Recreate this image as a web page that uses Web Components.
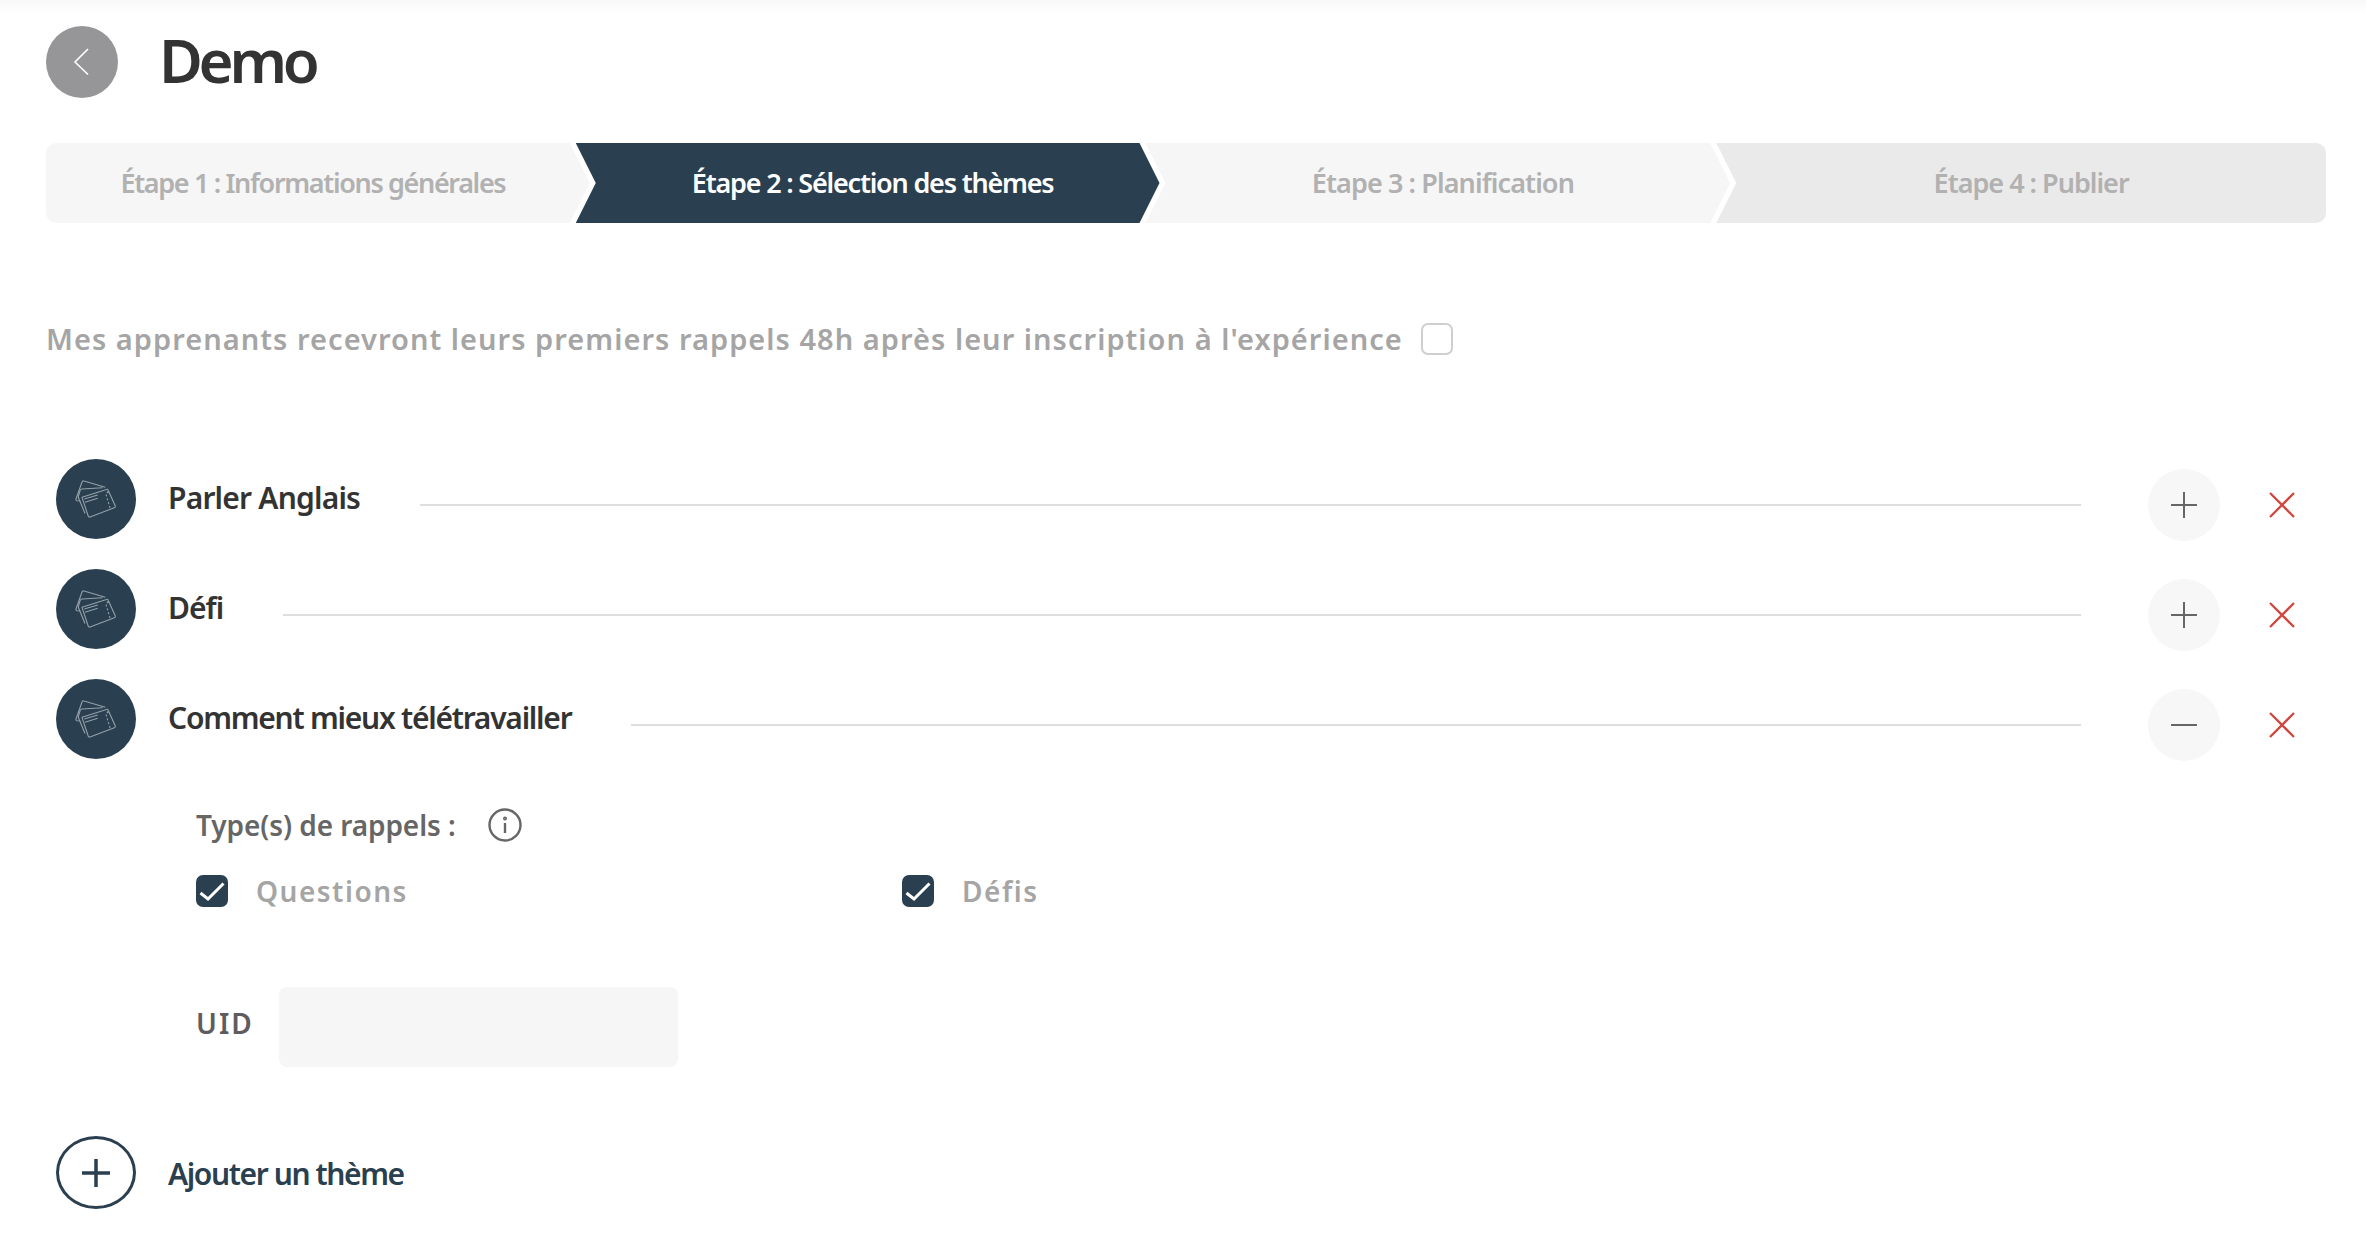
<!DOCTYPE html>
<html lang="fr">
<head>
<meta charset="utf-8">
<title>Demo</title>
<style>
    html, body { margin: 0; background: #fff; }
    body { font-family: "Noto Sans", "Open Sans", sans-serif; }
</style>
</head>
<body>
<theme-page></theme-page>
<script>
const BASE_FONT = '"Noto Sans", "Open Sans", sans-serif';

class PageHeader extends HTMLElement {
    constructor() {
        super();
        this.attachShadow({ mode: 'open' });
        this.shadowRoot.innerHTML = `
        <style>
        :host { display: flex; align-items: center; gap: 41px; height: 72px; }
        .back { width: 72px; height: 72px; border-radius: 50%; background: #969597; display: flex; align-items: center; justify-content: center; }
        h1 { margin: -5px 0 0; font: 600 60px/72px ${BASE_FONT}; color: #333; letter-spacing: -4.3px; }
        </style>
        <div class="back">
            <svg width="72" height="72" viewBox="0 0 72 72" fill="none" stroke="#fff" stroke-width="1.6"><path d="M42 23 29 36l13 12.500"/></svg>
        </div>
        <h1><slot></slot></h1>`;
    }
}

class StepBar extends HTMLElement {
    constructor() {
        super();
        this.attachShadow({ mode: 'open' });
        this.shadowRoot.innerHTML = `
        <style>
        :host { display: flex; height: 80px; margin-top: 45px; }
        </style>
        <slot></slot>`;
    }
}

class StepItem extends HTMLElement {
    constructor() {
        super();
        this.attachShadow({ mode: 'open' });
        this.shadowRoot.innerHTML = `
        <style>
        :host {
            display: flex; align-items: center; justify-content: center; height: 80px; box-sizing: border-box;
            background: #f6f6f6; color: #b1b1b1; font: 600 27px/1 ${BASE_FONT}; letter-spacing: -1.2px; margin-left: -14px;
            clip-path: polygon(0 0, calc(100% - 20px) 0, 100% 50%, calc(100% - 20px) 100%, 0 100%, 20px 50%);
            padding: 0 20px 2px 30px;
        }
        :host([first]) { margin-left: 0; border-radius: 10px 0 0 10px; padding: 0 10px 2px 0; letter-spacing: -1.35px; clip-path: polygon(0 0, calc(100% - 20px) 0, 100% 50%, calc(100% - 20px) 100%, 0 100%); }
        :host([active]) { background: #2a3f4f; color: #fff; }
        :host([last]) { background: #eaeaea; border-radius: 0 10px 10px 0; clip-path: polygon(0 0, 100% 0, 100% 100%, 0 100%, 20px 50%); padding-right: 0; padding-left: 20px; }
        </style>
        <slot></slot>`;
    }
}

class CheckBox extends HTMLElement {
    constructor() {
        super();
        this.attachShadow({ mode: 'open' });
        this.shadowRoot.innerHTML = `
        <style>
        :host { display: flex; align-items: center; justify-content: center; flex: none; width: 32px; height: 32px; box-sizing: border-box; border-radius: 7px; border: 2px solid #cfcfcf; }
        :host([checked]) { border: 0; background: #2a3f4f; }
        svg { display: none; }
        :host([checked]) svg { display: block; }
        </style>
        <svg width="32" height="32" viewBox="0 0 32 32" fill="none" stroke="#fff" stroke-width="3"><path d="M4.500 18l7.500 6L27.500 8.500"/></svg>`;
    }
}

class NoticeLine extends HTMLElement {
    constructor() {
        super();
        this.attachShadow({ mode: 'open' });
        this.shadowRoot.innerHTML = `
        <style>
        :host { display: flex; align-items: center; gap: 18px; height: 31px; margin-top: 100px; color: #a5a5a5; font: 600 29px/31px ${BASE_FONT}; letter-spacing: 1.03px; }
        </style>
        <span><slot></slot></span>
        <check-box></check-box>`;
    }
}

class ThemeRow extends HTMLElement {
    constructor() {
        super();
        this.attachShadow({ mode: 'open' });
        const open = this.hasAttribute('open');
        this.shadowRoot.innerHTML = `
        <style>
        :host { display: flex; align-items: flex-start; height: 82px; margin-left: 10px; margin-bottom: 28px; letter-spacing: -1px; }
        .icon { flex: none; width: 80px; height: 80px; border-radius: 50%; background: #2a3f4f; }
        .name { margin-left: 32px; font: 600 30px/78px ${BASE_FONT}; color: #333; white-space: nowrap; }
        .line { flex: 1; height: 2px; margin: 45px 0 0 60px; background: #dedede; }
        .toggle { flex: none; display: block; margin-left: 67px; margin-top: 10px; width: 72px; height: 72px; border-radius: 50%; background: #f7f7f7; }
        .remove { flex: none; display: block; margin: 33px 31px 0 49px; }
        </style>
        <div class="icon">
            <svg width="80" height="80" viewBox="0 0 80 80" fill="none" stroke="#93a1aa" stroke-width="1.100" stroke-linejoin="round">
                <path d="M24.300 42 21 41.700q-1.400-.4-1-1.700L26 23q.5-1.500 2-1L49.300 28.300"/>
                <path d="M46.500 28.800 26 30q-1.300.1-1.800 1.400L22.600 36.500q-.5 1.300 0 2.500L29 54.500"/>
                <path d="M26 38.300 50.500 30.400q1.300-.4 1.800 1L59.300 47q.4 1.300-1 1.800L34 58q-1.300.4-1.800-1z"/>
                <path d="M28.300 40l13.400-4M29 43.300l12.700-4"/>
                <path d="M50 35.500l4.500 15" stroke-dasharray="2 2"/>
                <circle cx="51.700" cy="33.300" r=".5"/>
            </svg>
        </div>
        <div class="name"><slot></slot></div>
        <div class="line"></div>
        <svg class="toggle" viewBox="0 0 72 72" fill="none" stroke="#666" stroke-width="2">
            <path d="M23 36h26${open ? '' : 'M36 23v26'}"/>
        </svg>
        <svg class="remove" width="26" height="26" viewBox="0 0 26 26" fill="none" stroke="#d0473f" stroke-width="2.300"><path d="M1 1l24 24M25 1 1 25"/></svg>`;
    }
}

class ReminderPanel extends HTMLElement {
    constructor() {
        super();
        this.attachShadow({ mode: 'open' });
        this.shadowRoot.innerHTML = `
        <style>
        :host { display: block; padding-left: 150px; margin-top: 44px; }
        .title { display: flex; align-items: center; gap: 32px; height: 40px; font: 600 28px/40px ${BASE_FONT}; color: #666; letter-spacing: -0.08px; }
        .options { display: flex; height: 32px; margin-top: 30px; }
        .opt { display: flex; align-items: center; gap: 28px; width: 706px; font: 600 28px/32px ${BASE_FONT}; color: #a5a5a5; letter-spacing: 1.500px; }
        .uid { display: flex; align-items: center; margin-top: 80px; font: 600 28px/1 ${BASE_FONT}; color: #5f5c60; letter-spacing: 2px; }
        .uid span { width: 83px; margin-top: -8px; }
        .uid div { width: 399px; height: 80px; border-radius: 8px; background: #f6f6f6; }
        </style>
        <div class="title">
            <span>Type(s) de rappels :</span>
            <svg width="34" height="34" viewBox="0 0 34 34" fill="none" stroke="#666" stroke-width="2.400"><circle cx="17" cy="17" r="15.500"/><path d="M17 15v10"/><circle cx="17" cy="10.500" r=".8"/></svg>
        </div>
        <div class="options">
            <div class="opt"><check-box checked></check-box><span>Questions</span></div>
            <div class="opt"><check-box checked></check-box><span>Défis</span></div>
        </div>
        <div class="uid"><span>UID</span><div></div></div>`;
    }
}

class AddTheme extends HTMLElement {
    constructor() {
        super();
        this.attachShadow({ mode: 'open' });
        this.shadowRoot.innerHTML = `
        <style>
        :host { display: flex; align-items: center; gap: 32px; height: 73px; margin: 69px 0 0 10px; font: 600 30px/1 ${BASE_FONT}; color: #2a3f4f; letter-spacing: -1.4px; }
        .circle { width: 80px; height: 73px; flex: none; box-sizing: border-box; border: 3px solid #2a3f4f; border-radius: 50%; display: flex; align-items: center; justify-content: center; }
        span { margin-top: 2px; }
        </style>
        <div class="circle"><svg width="28" height="28" viewBox="0 0 28 28" stroke="#2a3f4f" stroke-width="3.500"><path d="M0 14h28M14 0v28"/></svg></div>
        <span><slot></slot></span>`;
    }
}

class ThemePage extends HTMLElement {
    constructor() {
        super();
        this.attachShadow({ mode: 'open' });
        this.shadowRoot.innerHTML = `
        <style>
        :host { display: block; height: 1246px; box-sizing: border-box; padding: 26px 40px 0 46px; background: linear-gradient(#f8f8f8, #fff 14px) no-repeat; overflow: hidden; }
        .rows { margin-top: 105px; }
        </style>
        <page-header>Demo</page-header>
        <step-bar>
            <step-item first style="width:544px">Étape 1 : Informations générales</step-item>
            <step-item active style="width:584px">Étape 2 : Sélection des thèmes</step-item>
            <step-item style="width:585px;letter-spacing:-.9px">Étape 3 : Planification</step-item>
            <step-item last style="width:610px;letter-spacing:-1px">Étape 4 : Publier</step-item>
        </step-bar>
        <notice-line>Mes apprenants recevront leurs premiers rappels 48h après leur inscription à l'expérience</notice-line>
        <div class="rows">
            <theme-row style="letter-spacing:-.8px">Parler Anglais</theme-row>
            <theme-row>Défi</theme-row>
            <theme-row open style="letter-spacing:-1.25px">Comment mieux télétravailler</theme-row>
        </div>
        <reminder-panel></reminder-panel>
        <add-theme>Ajouter un thème</add-theme>`;
    }
}

customElements.define('page-header', PageHeader);
customElements.define('step-bar', StepBar);
customElements.define('step-item', StepItem);
customElements.define('check-box', CheckBox);
customElements.define('notice-line', NoticeLine);
customElements.define('theme-row', ThemeRow);
customElements.define('reminder-panel', ReminderPanel);
customElements.define('add-theme', AddTheme);
customElements.define('theme-page', ThemePage);
</script>
</body>
</html>
